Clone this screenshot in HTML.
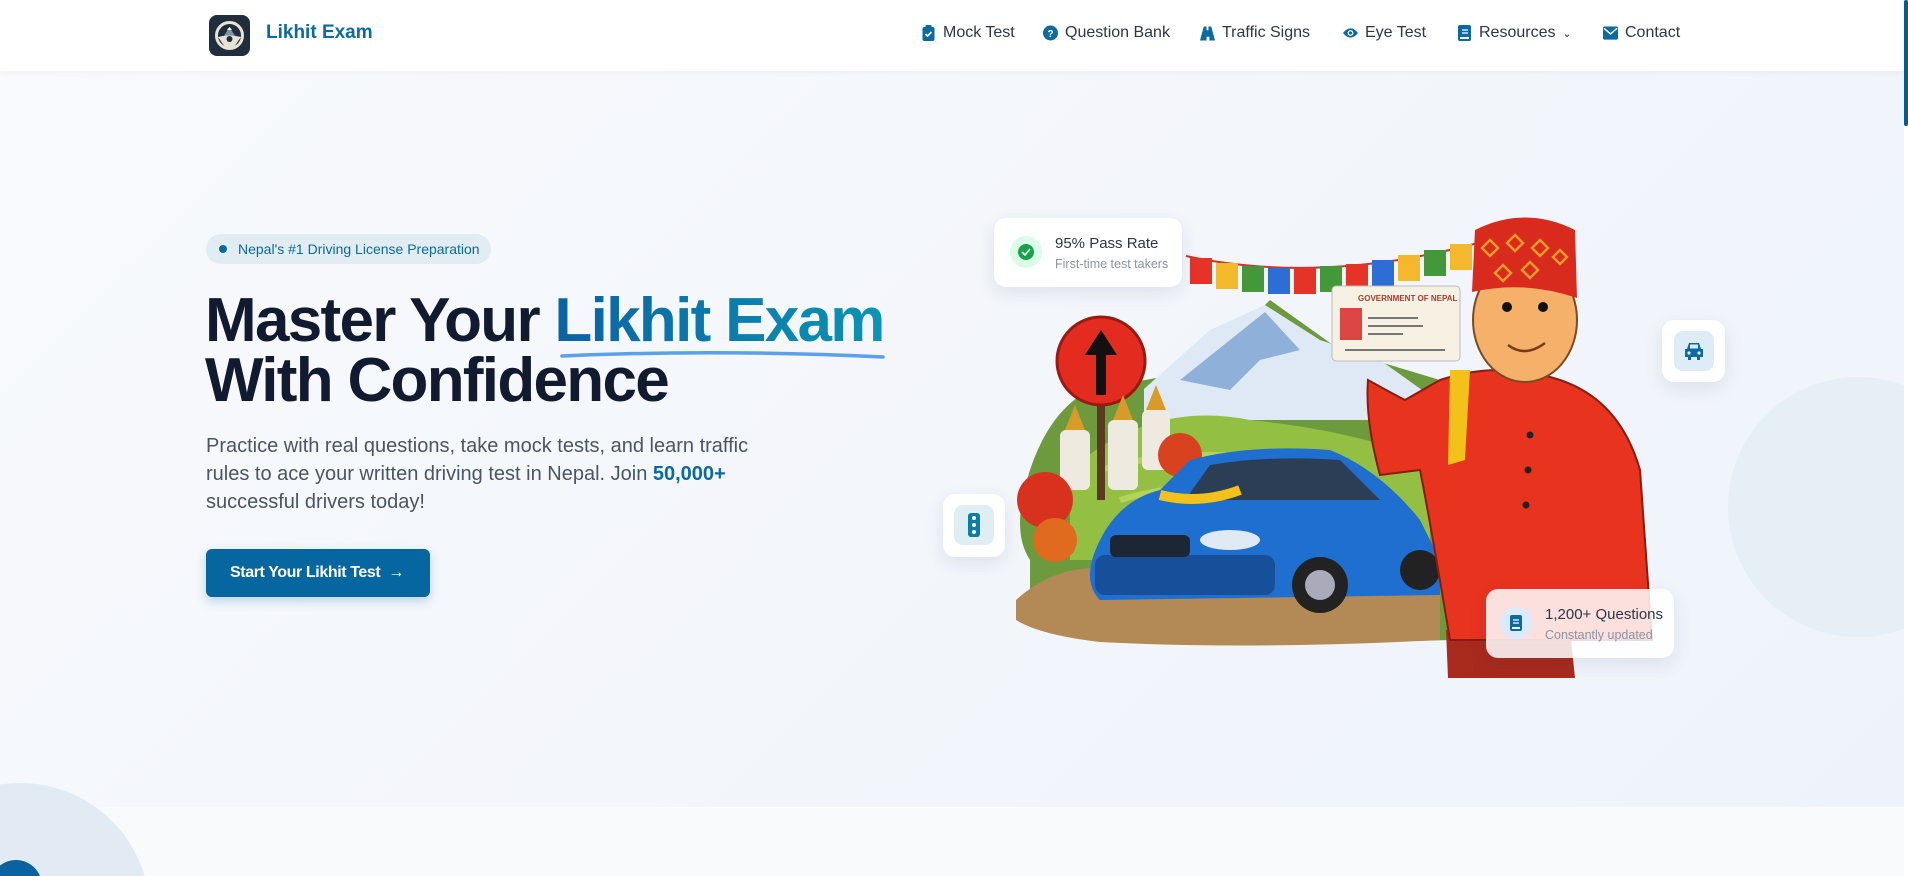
<!DOCTYPE html>
<html><head><meta charset="utf-8">
<style>
*{margin:0;padding:0;box-sizing:border-box}
html,body{width:1908px;height:876px;overflow:hidden}
body{font-family:"Liberation Sans",sans-serif;background:linear-gradient(135deg,#f8fafd 0%,#f3f6fb 50%,#eef3fb 100%);position:relative}
#wrap{position:absolute;left:0;top:0;width:1908px;height:876px;overflow:hidden}
.nav{position:absolute;left:0;top:0;width:1904px;height:71px;background:#fff;box-shadow:0 2px 6px rgba(0,0,0,.04)}
.logo{position:absolute;left:209px;top:15px;width:41px;height:41px;border-radius:8px;background:#1f2d3d}
.brand{position:absolute;left:266px;top:22px;font-size:19px;font-weight:bold;color:#0a6aa1}
.nl{position:absolute;top:24px;font-size:16px;color:#2d3748;display:flex;align-items:center;gap:7px;white-space:nowrap}
.nl svg{width:15px;height:16px}
.scroll{position:absolute;right:0;top:0;width:4px;height:876px;background:#fff}
.scroll i{position:absolute;left:0;top:0;width:4px;height:126px;background:#0a5a8a;border-radius:2px}
.badge{position:absolute;left:206px;top:234px;width:285px;height:30px;border-radius:15px;background:#e1ecf3;color:#0a6aa1;font-size:14px;line-height:30px;padding-left:32px}
.badge:before{content:"";position:absolute;left:13px;top:11px;width:8px;height:8px;border-radius:50%;background:#0a6aa1}
h1{position:absolute;left:205px;top:291px;font-size:62px;line-height:60px;font-weight:bold;color:#111a2e;letter-spacing:-1.7px;white-space:nowrap}
h1 span{background:linear-gradient(90deg,#0a62a3,#0b94b4);-webkit-background-clip:text;color:transparent}
.ul{position:absolute;left:560px;top:347px}
p.lead{position:absolute;left:206px;top:432px;width:580px;font-size:20px;line-height:28px;color:#4b5563}
p.lead b{color:#0a6aa1}
.btn{position:absolute;left:206px;top:549px;width:224px;height:48px;border-radius:6px;background:#06669f;color:#fff;font-weight:bold;font-size:16px;line-height:48px;padding-left:24px;letter-spacing:-.4px;box-shadow:0 4px 10px rgba(6,102,159,.25)}
.band{position:absolute;left:0;top:807px;width:1904px;height:69px;background:#f8fafc}
.card{position:absolute;background:#fff;border-radius:12px;box-shadow:0 6px 18px rgba(30,50,90,.10)}
.ct{position:absolute;font-size:15px;color:#2d3748;white-space:nowrap}
.cs{position:absolute;font-size:12.5px;color:#8a93a3;white-space:nowrap}
</style></head><body><div id="wrap">
<div style="position:absolute;left:1728px;top:377px;width:260px;height:260px;border-radius:50%;background:#e6eff5"></div>
<div class="band"></div>
<div style="position:absolute;left:-110px;top:783px;width:260px;height:260px;border-radius:50%;background:#e2eaf3"></div>
<div style="position:absolute;left:-10px;top:860px;width:52px;height:52px;border-radius:50%;background:#0a62a0"></div>

<div class="nav">
 <div class="logo"><svg width="41" height="41" viewBox="0 0 41 41"><circle cx="20.5" cy="20.5" r="13" fill="none" stroke="#e8e2d4" stroke-width="3"/><path d="M13 24 L20.5 12 L28 24 Z" fill="#7c93a8"/><path d="M18 15 L20.5 12 L23 15 Z" fill="#fff"/><path d="M9 22 Q20 19 32 22 L25 32 L16 32 Z" fill="#e8e2d4"/><circle cx="20.5" cy="24" r="3" fill="#1f2d3d"/></svg></div>
 <div class="brand">Likhit Exam</div>
 <div class="nl" style="left:921px"><svg viewBox="0 0 12 16"><rect x="0" y="2" width="12" height="14" rx="2" fill="#0a6aa1"/><rect x="3" y="0" width="6" height="4" rx="1" fill="#0a6aa1"/><path d="M3 9l2 2 4-4" stroke="#fff" stroke-width="1.6" fill="none"/></svg>Mock Test</div>
 <div class="nl" style="left:1043px"><svg viewBox="0 0 16 16"><circle cx="8" cy="8" r="8" fill="#0a6aa1"/><text x="8" y="12" font-size="11" font-weight="bold" fill="#fff" text-anchor="middle" font-family="Liberation Sans">?</text></svg>Question Bank</div>
 <div class="nl" style="left:1200px"><svg viewBox="0 0 16 16"><path d="M4 1h3v4h2V1h3l4 15h-6v-4H7v4H0z" fill="#0a6aa1"/></svg>Traffic Signs</div>
 <div class="nl" style="left:1343px"><svg viewBox="0 0 18 16"><path d="M0 8Q9-3 18 8Q9 19 0 8z" fill="#0a6aa1"/><circle cx="9" cy="8" r="3.5" fill="#fff"/><circle cx="9" cy="8" r="2" fill="#0a6aa1"/></svg>Eye Test</div>
 <div class="nl" style="left:1457px"><svg viewBox="0 0 13 16"><rect width="13" height="16" rx="2" fill="#0a6aa1"/><path d="M4 5h6M4 8h6" stroke="#fff" stroke-width="1.3"/><rect x="2" y="12" width="9" height="2" fill="#fff"/></svg>Resources <span style="font-size:11px">&#8964;</span></div>
 <div class="nl" style="left:1603px"><svg viewBox="0 0 16 14"><rect width="16" height="14" rx="1.5" fill="#0a6aa1"/><path d="M1 2l7 6 7-6" stroke="#fff" stroke-width="1.5" fill="none"/></svg>Contact</div>
</div>
<div class="scroll"><i></i></div>

<div class="badge">Nepal's #1 Driving License Preparation</div>
<h1>Master Your <span>Likhit Exam</span><br>With Confidence</h1>
<svg class="ul" width="325" height="14" viewBox="0 0 325 14"><path d="M2 9 Q160 2 323 10" stroke="#5aa0ec" stroke-width="3.5" fill="none" stroke-linecap="round"/></svg>
<p class="lead">Practice with real questions, take mock tests, and learn traffic rules to ace your written driving test in Nepal. Join <b>50,000+</b> successful drivers today!</p>
<div class="btn">Start Your Likhit Test &nbsp;&rarr;</div>

<svg style="position:absolute;left:1000px;top:210px" width="680" height="470" viewBox="1000 210 680 470">
 <path d="M1030 560 Q1010 530 1030 470 Q1050 410 1090 390 L1200 370 L1270 300 L1340 350 L1440 380 L1450 640 Q1300 645 1200 638 Q1080 640 1030 615 Z" fill="#6d9a3c"/>
 <path d="M1144 389 L1210 330 L1265 305 L1320 340 L1380 360 L1436 400 L1436 420 L1144 420 Z" fill="#dfe9f5"/>
 <path d="M1180 380 L1265 312 L1300 350 L1260 360 L1230 390 Z" fill="#8fb0d8"/>
 <path d="M1070 470 Q1150 400 1250 420 Q1350 430 1430 460 L1430 560 L1070 560 Z" fill="#93c043"/>
 <path d="M1100 470 Q1200 440 1330 470" stroke="#b5d35a" stroke-width="6" fill="none"/>
 <path d="M1120 500 Q1220 470 1350 500" stroke="#b5d35a" stroke-width="6" fill="none"/>
 <rect x="1097" y="380" width="8" height="120" fill="#5b3a22"/>
 <circle cx="1101" cy="361" r="44" fill="#e42b1f" stroke="#9a1a12" stroke-width="3"/>
 <path d="M1101 330 L1085 355 L1096 355 L1096 395 L1106 395 L1106 355 L1117 355 Z" fill="#111"/>
 <g fill="#eeeae0"><rect x="1060" y="430" width="30" height="60" rx="6"/><rect x="1108" y="420" width="30" height="70" rx="6"/><rect x="1142" y="410" width="28" height="60" rx="6"/></g>
 <g fill="#d89b2a"><path d="M1075 405l-10 25h20z"/><path d="M1123 395l-10 25h20z"/><path d="M1156 385l-10 25h20z"/></g>
 <circle cx="1045" cy="500" r="28" fill="#d8321e"/><circle cx="1180" cy="455" r="22" fill="#d8421e"/><circle cx="1055" cy="540" r="22" fill="#e06a1e"/>
 <path d="M1016 600 Q1060 560 1120 570 L1440 560 L1440 640 Q1250 650 1100 642 Q1040 635 1016 620 Z" fill="#b38a55"/>
 <path d="M1100 540 Q1120 500 1160 490 L1190 460 Q1250 444 1330 450 Q1380 470 1420 520 L1440 560 L1440 595 L1100 600 Q1080 580 1100 540 Z" fill="#1f6fd0"/>
 <path d="M1185 500 L1210 465 Q1270 455 1340 460 L1380 500 Z" fill="#2c3e55"/>
 <rect x="1095" y="555" width="180" height="40" rx="10" fill="#174f9a"/>
 <rect x="1110" y="535" width="80" height="22" rx="6" fill="#1c2733"/>
 <ellipse cx="1230" cy="540" rx="30" ry="10" fill="#dfe9f3"/>
 <circle cx="1320" cy="585" r="28" fill="#222"/><circle cx="1320" cy="585" r="15" fill="#aab"/>
 <circle cx="1420" cy="570" r="20" fill="#222"/>
 <path d="M1160 495 Q1200 505 1240 490" stroke="#f2c21a" stroke-width="10" fill="none"/>
 <path d="M1186 256 Q1320 285 1478 243" stroke="#c33" stroke-width="2" fill="none"/>
 <g><rect x="1190" y="258" width="22" height="26" fill="#e53328"/><rect x="1216" y="263" width="22" height="26" fill="#f4b82b"/><rect x="1242" y="266" width="22" height="26" fill="#43993a"/><rect x="1268" y="268" width="22" height="26" fill="#2c6ed6"/><rect x="1294" y="268" width="22" height="26" fill="#e53328"/><rect x="1320" y="266" width="22" height="26" fill="#43993a"/><rect x="1346" y="264" width="22" height="26" fill="#e53328"/><rect x="1372" y="260" width="22" height="26" fill="#2c6ed6"/><rect x="1398" y="255" width="22" height="26" fill="#f4b82b"/><rect x="1424" y="250" width="22" height="26" fill="#43993a"/><rect x="1450" y="244" width="22" height="26" fill="#f4b82b"/></g>
 <path d="M1446 630 L1570 630 L1575 678 L1448 678 Z" fill="#a82a1c"/>
 <path d="M1440 380 Q1500 360 1560 380 Q1620 400 1640 470 L1652 640 L1450 640 Q1430 520 1420 470 L1380 475 Q1365 420 1368 380 Q1395 395 1405 400 Z" fill="#e8331f" stroke="#8a1b10" stroke-width="2"/>
 <path d="M1450 370 L1470 370 L1465 460 L1448 465 Z" fill="#f2c21a"/>
 <circle cx="1530" cy="435" r="3.5" fill="#222"/><circle cx="1528" cy="470" r="3.5" fill="#222"/><circle cx="1526" cy="505" r="3.5" fill="#222"/>
 <ellipse cx="1525" cy="320" rx="52" ry="62" fill="#f5b16a" stroke="#7a4a22" stroke-width="2"/>
 <circle cx="1507" cy="307" r="5" fill="#111"/><circle cx="1543" cy="307" r="5" fill="#111"/>
 <path d="M1508 345 Q1525 358 1545 343" stroke="#7a3a1a" stroke-width="2.5" fill="none"/>
 <path d="M1475 230 Q1525 205 1575 230 L1577 298 Q1525 280 1472 292 Z" fill="#d92a1e"/>
 <g fill="none" stroke="#f39a2b" stroke-width="2.5"><path d="M1490 240l8 8-8 8-8-8z"/><path d="M1515 235l8 8-8 8-8-8z"/><path d="M1540 240l8 8-8 8-8-8z"/><path d="M1560 250l7 7-7 7-7-7z"/><path d="M1503 265l8 8-8 8-8-8z"/><path d="M1530 262l8 8-8 8-8-8z"/></g>
 <path d="M1360 360 Q1355 330 1370 320 L1390 325 L1405 360 Z" fill="#f5b16a" stroke="#7a4a22" stroke-width="1.5"/>
 <rect x="1332" y="286" width="128" height="75" rx="4" fill="#f6f1e3" stroke="#bbb"/>
 <text x="1358" y="301" font-size="8" fill="#b03a2e" font-family="Liberation Sans" font-weight="bold">GOVERNMENT OF NEPAL</text>
 <rect x="1340" y="308" width="22" height="32" fill="#d44"/>
 <g stroke="#777" stroke-width="2"><path d="M1368 318h50M1368 326h55M1368 334h35M1345 350h100"/></g>
</svg>

<div class="card" style="left:994px;top:218px;width:188px;height:69px">
 <div style="position:absolute;left:16px;top:18px;width:32px;height:32px;border-radius:50%;background:#dcfce7"></div>
 <div style="position:absolute;left:24px;top:26px;width:16px;height:16px;border-radius:50%;background:#16a34a"></div>
 <svg style="position:absolute;left:27px;top:30px" width="10" height="8"><path d="M1 4l3 3 5-6" stroke="#fff" stroke-width="1.6" fill="none"/></svg>
 <div class="ct" style="left:61px;top:17px">95% Pass Rate</div>
 <div class="cs" style="left:61px;top:39px">First-time test takers</div>
</div>
<div class="card" style="left:1662px;top:320px;width:63px;height:62px">
 <div style="position:absolute;left:12px;top:11px;width:40px;height:40px;border-radius:9px;background:#deedf5"></div>
 <svg style="position:absolute;left:21px;top:21px" width="22" height="20" viewBox="0 0 22 20"><path d="M4 8l2-6h10l2 6h2v8h-3v3h-3v-3H8v3H5v-3H2V8z" fill="#0a6aa1"/><rect x="7" y="3.5" width="8" height="4" fill="#deedf5"/><circle cx="6" cy="12" r="1.6" fill="#deedf5"/><circle cx="16" cy="12" r="1.6" fill="#deedf5"/></svg>
</div>
<div class="card" style="left:943px;top:494px;width:62px;height:63px">
 <div style="position:absolute;left:11px;top:11px;width:40px;height:40px;border-radius:9px;background:#dfeef3"></div>
 <svg style="position:absolute;left:25px;top:19px" width="12" height="24" viewBox="0 0 12 24"><rect width="12" height="24" rx="3" fill="#0b7ea3"/><circle cx="6" cy="5" r="2" fill="#fff"/><circle cx="6" cy="12" r="2" fill="#fff"/><circle cx="6" cy="19" r="2" fill="#fff"/></svg>
</div>
<div class="card" style="left:1486px;top:589px;width:188px;height:69px;background:rgba(255,255,255,.85)">
 <div style="position:absolute;left:14px;top:18px;width:32px;height:32px;border-radius:50%;background:#dbeafe"></div>
 <svg style="position:absolute;left:24px;top:26px" width="12" height="16" viewBox="0 0 12 16"><rect width="12" height="16" rx="2" fill="#0a6aa1"/><path d="M3 5h6M3 8h6" stroke="#fff" stroke-width="1.3"/><rect x="2" y="12" width="8" height="2" fill="#fff"/></svg>
 <div class="ct" style="left:59px;top:17px">1,200+ Questions</div>
 <div class="cs" style="left:59px;top:39px">Constantly updated</div>
</div>
</div></body></html>
